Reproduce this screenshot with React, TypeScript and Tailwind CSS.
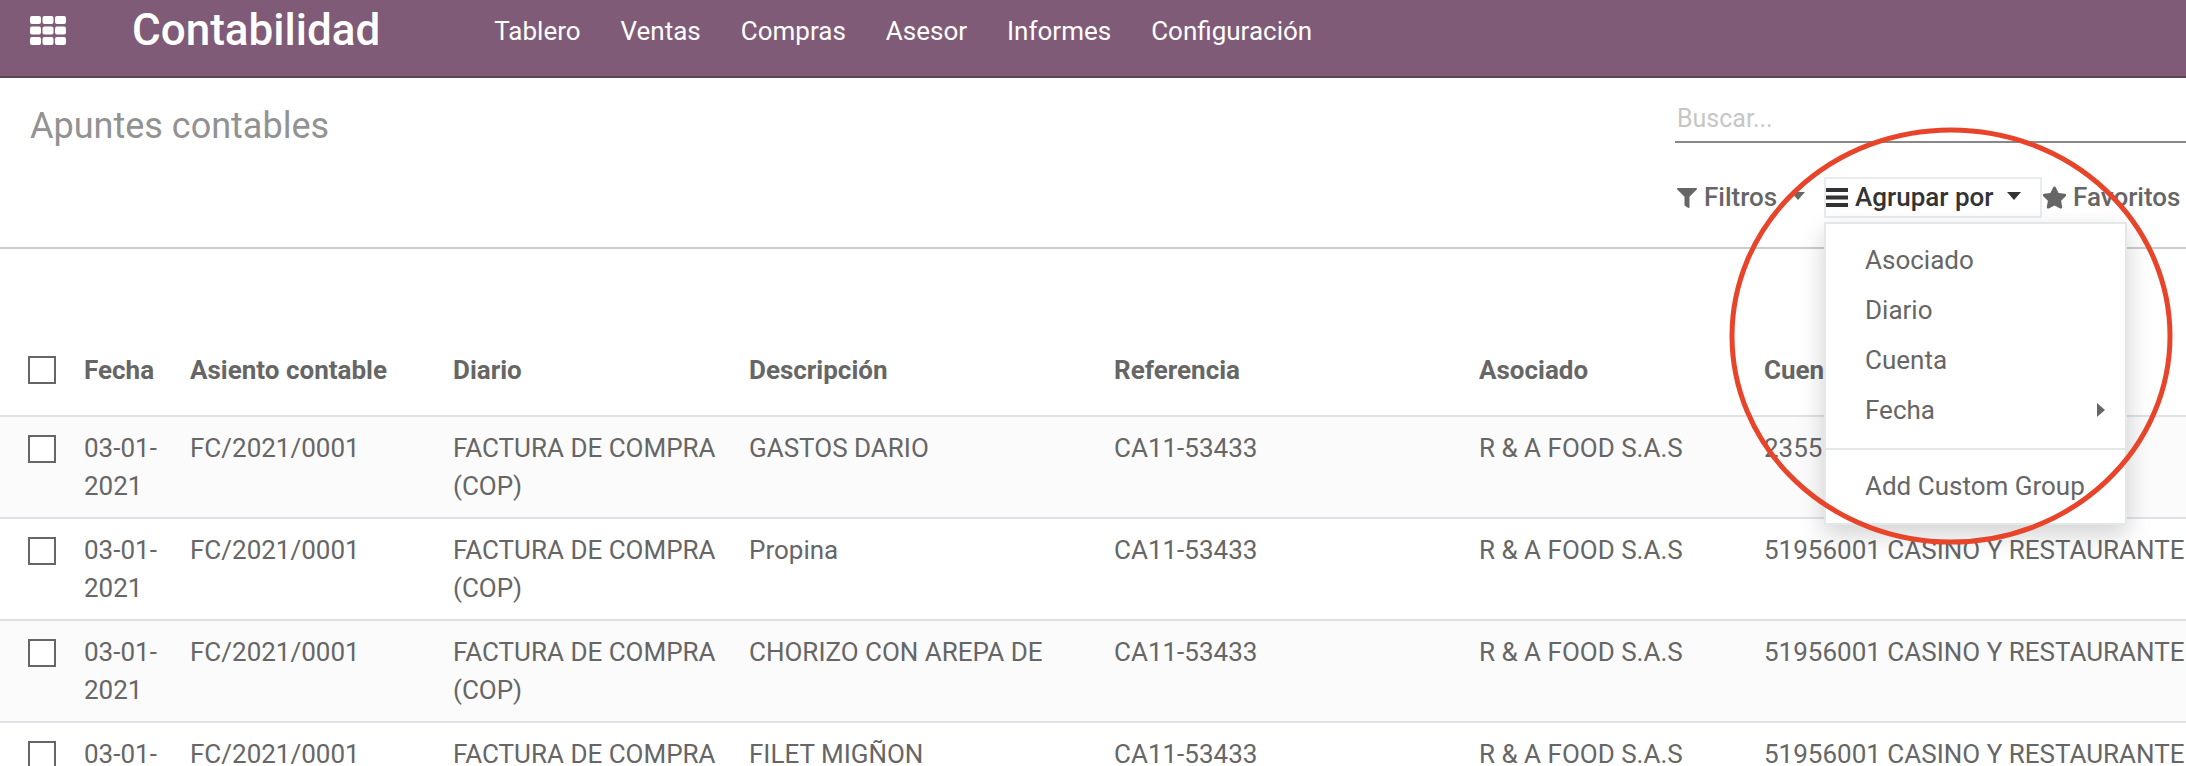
import React from "react";
import { FaFilter, FaStar } from "react-icons/fa";

const navItems = ["Tablero", "Ventas", "Compras", "Asesor", "Informes", "Configuración"];

const rows = [
  { desc: "GASTOS DARIO", account: "2355" },
  { desc: "Propina", account: "51956001 CASINO Y RESTAURANTE" },
  { desc: "CHORIZO CON AREPA DE", account: "51956001 CASINO Y RESTAURANTE" },
  { desc: "FILET MIGÑON", account: "51956001 CASINO Y RESTAURANTE" },
];

const groupItems = ["Asociado", "Diario", "Cuenta"];

const Checkbox = () => <div className="w-[28px] h-[28px] border-2 border-[#666666] bg-white" />;

const Caret = ({ className }: { className: string }) => (
  <span className={`inline-block w-0 h-0 mb-[4px] border-x-[7px] border-x-transparent border-t-[8px] ${className}`} />
);

const AppsIcon = () => (
  <svg width="36" height="29" viewBox="0 0 36 29" fill="currentColor" className="ml-[30px] mb-[16px] shrink-0">
    {[0, 10.5, 21].map((y) =>
      [0, 12.5, 25].map((x) => <rect key={`${x}-${y}`} x={x} y={y} width="11" height="8" rx="2" />),
    )}
  </svg>
);

const BarsIcon = () => (
  <svg width="22" height="19" viewBox="0 0 22 19" fill="currentColor" className="shrink-0">
    <rect x="0" y="0" width="22" height="4" />
    <rect x="0" y="7.5" width="22" height="4" />
    <rect x="0" y="15" width="22" height="4" />
  </svg>
);

const Table = () => (
  <table className="table-fixed border-collapse w-[2400px] text-[26px] leading-[38px] text-[#666666]">
    <colgroup>
      <col className="w-[84px]" />
      <col className="w-[106px]" />
      <col className="w-[263px]" />
      <col className="w-[296px]" />
      <col className="w-[365px]" />
      <col className="w-[365px]" />
      <col className="w-[285px]" />
      <col />
    </colgroup>
    <thead>
      <tr className="h-[167px] font-bold">
        <th className="pt-[107px] pl-[28px] align-top text-left">
          <Checkbox />
        </th>
        {["Fecha", "Asiento contable", "Diario", "Descripción", "Referencia", "Asociado", "Cuenta"].map((label) => (
          <th key={label} className="pt-[102px] align-top text-left font-bold leading-[38px]">
            {label}
          </th>
        ))}
        <th />
      </tr>
    </thead>
    <tbody>
      {rows.map((row, i) => (
        <tr key={i} className={`h-[102px] border-t-2 border-[#dee2e6] align-top ${i % 2 === 0 ? "bg-[#fbfbfb]" : "bg-white"}`}>
          <td className="pl-[28px] pt-[18px]">
            <Checkbox />
          </td>
          <td className="pt-[12px] pr-[24px]">03-01-2021</td>
          <td className="pt-[12px]">FC/2021/0001</td>
          <td className="pt-[12px] pr-[20px]">FACTURA DE COMPRA (COP)</td>
          <td className="pt-[12px]">{row.desc}</td>
          <td className="pt-[12px]">CA11-53433</td>
          <td className="pt-[12px]">R &amp; A FOOD S.A.S</td>
          <td className="pt-[12px] whitespace-nowrap">{row.account}</td>
          <td />
        </tr>
      ))}
    </tbody>
  </table>
);

const GroupMenu = () => (
  <div className="absolute left-[1824px] top-[222px] w-[303px] h-[303px] bg-white border-2 border-[#e4e7ea] shadow-[0_10px_24px_rgba(0,0,0,0.18)] text-[26px] text-[#666666] z-10">
    <div className="pt-[11px]">
      {groupItems.map((item) => (
        <div key={item} className="h-[50px] pl-[39px] flex items-center">
          {item}
        </div>
      ))}
      <div className="h-[50px] pl-[39px] pr-[20px] flex items-center justify-between">
        Fecha
        <span className="w-0 h-0 border-y-[7px] border-y-transparent border-l-[8px] border-l-[#666666]" />
      </div>
    </div>
    <div className="mt-[13px] border-t-2 border-[#e4e7ea] pt-[11px]">
      <div className="h-[50px] pl-[39px] flex items-center">Add Custom Group</div>
    </div>
  </div>
);

export default function App() {
  return (
    <div className="relative w-[2186px] h-[766px] overflow-hidden bg-white font-['Roboto',sans-serif]">
      <nav className="h-[78px] bg-[#7f5b78] border-b-2 border-[#5f4259] flex items-center text-white">
        <AppsIcon />
        <span className="ml-[66px] mb-[16px] text-[44px] font-medium leading-none">Contabilidad</span>
        <div className="ml-[114px] mb-[14px] flex gap-[40px] text-[26px]">
          {navItems.map((item) => (
            <span key={item}>{item}</span>
          ))}
        </div>
      </nav>

      <div className="h-[171px] border-b-2 border-[#cccccc] flex justify-between">
        <h1 className="ml-[30px] mt-[23px] text-[36px] leading-[50px] text-[#929292]">Apuntes contables</h1>
        <div className="w-[511px] flex flex-col">
          <div className="mt-[22px] h-[43px] border-b-2 border-[#888888] pl-[2px] text-[25px] leading-[38px] text-[#c6c6c6]">Buscar...</div>
          <div className="mt-[34px] flex items-center text-[26px] font-medium text-[#666666]">
            <div className="flex items-center w-[149px]">
              <FaFilter className="ml-[2px] w-[20px] h-[20px]" />
              <span className="ml-[7px]">Filtros</span>
              <Caret className="ml-[14px] border-t-[#666666]" />
            </div>
            <div className="w-[218px] h-[41px] border-2 border-[#e9ecef] flex items-center text-[#333333]">
              <BarsIcon />
              <span className="ml-[7px]">Agrupar por</span>
              <Caret className="ml-[14px] border-t-[#333333]" />
            </div>
            <div className="flex items-center">
              <FaStar className="w-[25px] h-[25px]" />
              <span className="ml-[6px]">Favoritos</span>
            </div>
          </div>
        </div>
      </div>

      <Table />
      <GroupMenu />

      {/* red annotation ring drawn over the screenshot */}
      <svg className="absolute left-0 top-0 z-20 pointer-events-none" width="2186" height="766">
        <ellipse cx="1951" cy="336" rx="219" ry="206" fill="none" stroke="#e8442a" strokeWidth="5" />
      </svg>
    </div>
  );
}
